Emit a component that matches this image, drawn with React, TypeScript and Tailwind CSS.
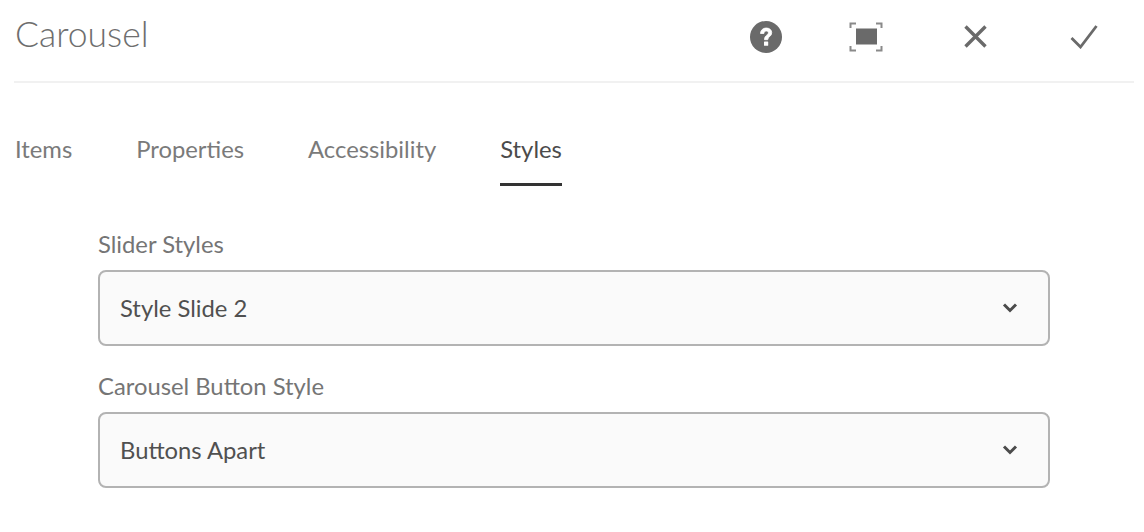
import { FC } from "react";

const font = "font-['Lato',sans-serif]";

const tabs = ["Items", "Properties", "Accessibility", "Styles"];

const SelectField: FC<{ label: string; value: string }> = ({ label, value }) => (
  <div className="flex flex-col">
    <label className="h-[40px] text-[23.8px] leading-[29px] text-[#757575]">{label}</label>
    <div className="flex h-[76px] items-center justify-between rounded-[8px] border-2 border-[#b3b3b3] bg-[#fafafa] pl-[20px] pr-[29px]">
      <span className="pt-[2px] text-[23.8px] text-[#505050]">{value}</span>
      <svg width="18" height="12" viewBox="0 0 18 12" fill="none">
        <path d="M3 2.5l6 6 6-6" stroke="#4b4b4b" strokeWidth="3" />
      </svg>
    </div>
  </div>
);

const App: FC = () => {
  return (
    <div className={`${font} h-[532px] w-[1144px] overflow-hidden bg-white`}>
      <div className="ml-[14px] mr-[10px] flex h-[83px] items-center border-b-2 border-[#f1f1f1] pb-[8px]">
        <h1 className="flex-1 pb-[6px] pl-[1px] text-[35.5px] font-light text-[#6e6e6e]">Carousel</h1>
        <div className="flex items-center">
          <button className="flex w-[36px] justify-center">
            <svg width="34" height="34" viewBox="0 0 34 34">
              <circle cx="17" cy="17" r="16" fill="#6a6a6a" />
              <path d="M11.5 13.5c0-3.300 2.500-5.500 5.700-5.500 3.300 0 5.500 2 5.500 4.700 0 3.900-4 3.900-4 7h-3.200c0-4.700 3.900-4.500 3.900-7 0-1-.8-1.700-2.100-1.700-1.400 0-2.300.9-2.400 2.500z" fill="#fff" stroke="#fff" strokeWidth="0.8" />
              <rect x="15" y="21.500" width="4.200" height="4.200" rx="0.5" fill="#fff" />
            </svg>
          </button>
          <button className="ml-[64px] flex w-[36px] justify-center">
            <svg width="34" height="30" viewBox="0 0 34 30" fill="none">
              <rect x="7" y="6.500" width="21" height="16" fill="#6a6a6a" />
              <path d="M1.500 6V1.500H7M27 1.500h5.500V6M1.500 24v4.500H7M27 28.500h5.500V24" stroke="#8a8a8a" strokeWidth="2" />
            </svg>
          </button>
          <button className="ml-[73px] flex w-[36px] justify-center">
            <svg width="25" height="25" viewBox="0 0 25 25" fill="none">
              <path d="M2.500 2.500l20 20M22.500 2.500l-20 20" stroke="#6a6a6a" strokeWidth="3.400" />
            </svg>
          </button>
          <button className="ml-[73px] mr-[32px] flex w-[36px] justify-center">
            <svg width="28" height="25" viewBox="0 0 28 25" fill="none">
              <path d="M1.500 14l9 9L26.500 2" stroke="#6a6a6a" strokeWidth="2.800" />
            </svg>
          </button>
        </div>
      </div>

      <div className="ml-[15px] mt-[36px] flex gap-[64px]">
        {tabs.map((tab) => (
          <div
            key={tab}
            className={`h-[67px] pt-[14px] text-[23.8px] leading-[32px] ${
              tab === "Styles"
                ? "border-b-[3px] border-[#333333] text-[#4b4b4b]"
                : "text-[#7a7a7a]"
            }`}
          >
            {tab}
          </div>
        ))}
      </div>

      <div className="ml-[98px] mt-[44px] flex w-[952px] flex-col gap-[26px]">
        <SelectField label="Slider Styles" value="Style Slide 2" />
        <SelectField label="Carousel Button Style" value="Buttons Apart" />
      </div>
    </div>
  );
};

export default App;
